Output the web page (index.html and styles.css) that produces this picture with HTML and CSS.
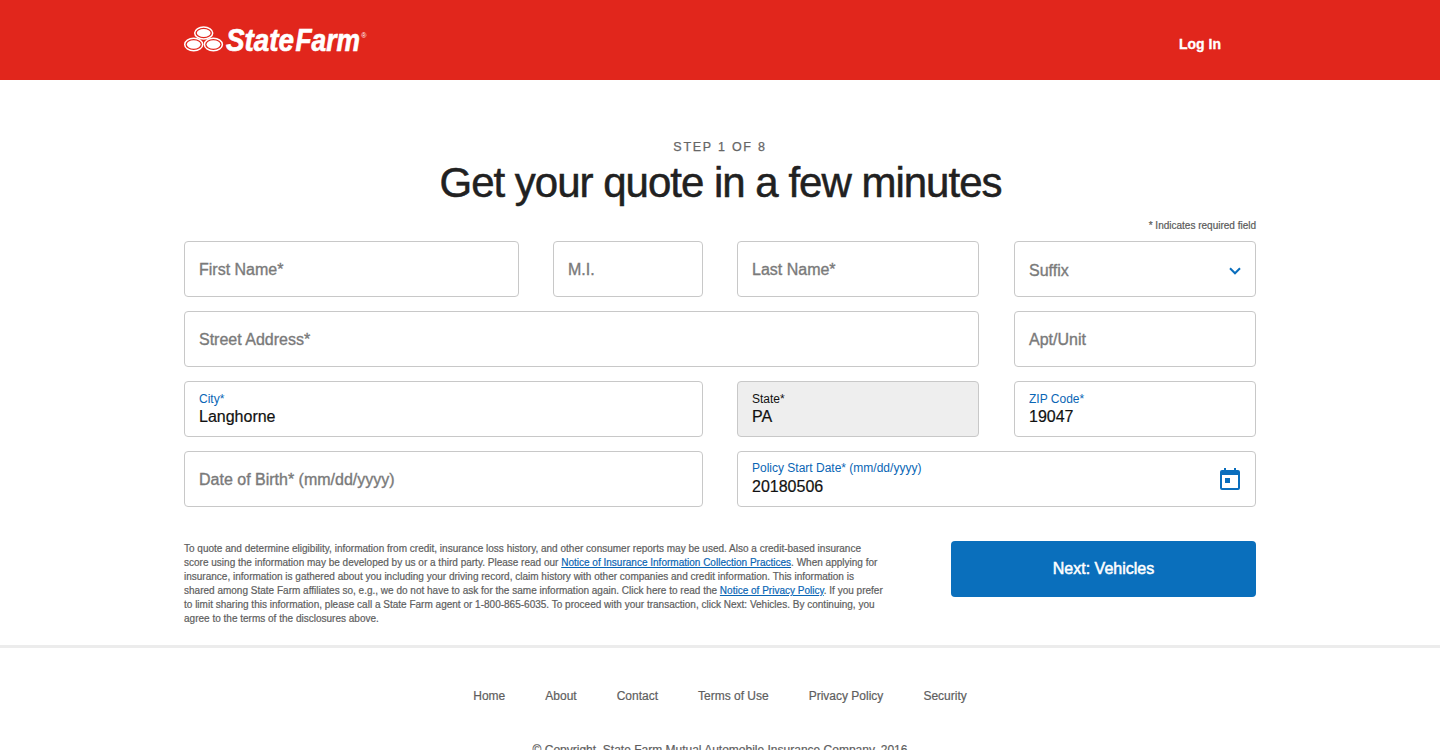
FILE: index.html
```html
<!DOCTYPE html>
<html lang="en">
<head>
<meta charset="utf-8">
<title>State Farm - Get your quote</title>
<link rel="stylesheet" href="styles.css">
</head>
<body>
<header class="site-header">
  <div class="container header-row">
    <svg class="logo" width="186" height="36" viewBox="0 0 186 36" role="img" aria-label="State Farm">
      <g fill="#e1261c" stroke="#fff" stroke-width="1.5">
        <ellipse cx="19.7" cy="9" rx="9" ry="5.9"/>
        <ellipse cx="9.7" cy="20.5" rx="9" ry="6.2"/>
        <ellipse cx="29.4" cy="20.5" rx="9" ry="6.2"/>
      </g>
      <g fill="#fff">
        <ellipse cx="19.7" cy="9" rx="6.9" ry="4"/>
        <ellipse cx="9.7" cy="20.5" rx="6.9" ry="4.2"/>
        <ellipse cx="29.4" cy="20.5" rx="6.9" ry="4.2"/>
      </g>
      <text class="logo-text" x="42" y="26.5" textLength="68" lengthAdjust="spacingAndGlyphs">State</text>
      <text class="logo-text" x="111.5" y="26.5" textLength="64.5" lengthAdjust="spacingAndGlyphs">Farm</text>
      <text class="logo-mark" x="177.3" y="14">®</text>
    </svg>
    <a class="login">Log In</a>
  </div>
</header>
<main class="container">
  <p class="step">STEP 1 OF 8</p>
  <h1 class="title">Get your quote in a few minutes</h1>
  <p class="required-note">* Indicates required field</p>
  <form class="fields">
    <div class="field first"><span class="placeholder">First Name*</span></div>
    <div class="field middle"><span class="placeholder">M.I.</span></div>
    <div class="field last"><span class="placeholder">Last Name*</span></div>
    <div class="field suffix"><span class="placeholder select-text">Suffix</span>
      <svg class="chevron" width="12" height="8" viewBox="0 0 12 8"><path d="M1 1.3 6 6.3 11 1.3" fill="none" stroke="#0a6ebd" stroke-width="2"/></svg>
    </div>
    <div class="field street"><span class="placeholder">Street Address*</span></div>
    <div class="field unit"><span class="placeholder">Apt/Unit</span></div>
    <div class="field city filled"><label>City*</label><span class="value">Langhorne</span></div>
    <div class="field state filled locked"><label>State*</label><span class="value">PA</span></div>
    <div class="field zip filled"><label>ZIP Code*</label><span class="value">19047</span></div>
    <div class="field birth"><span class="placeholder">Date of Birth* (mm/dd/yyyy)</span></div>
    <div class="field start">
      <div class="filled date-text"><label>Policy Start Date* (mm/dd/yyyy)</label><span class="value">20180506</span></div>
      <svg class="calendar" width="20" height="22" viewBox="0 0 20 22"><path fill="#0a6ebd" fill-rule="evenodd" d="M4 0h2v2h8V0h2v2h2a2 2 0 0 1 2 2v16a2 2 0 0 1-2 2H2a2 2 0 0 1-2-2V4a2 2 0 0 1 2-2h2zM2 7v13h16V7zM5 10h5v5H5z"/></svg>
    </div>
  </form>
  <section class="actions">
    <p class="disclosure">To quote and determine eligibility, information from credit, insurance loss history, and other consumer reports may be used. Also a credit-based insurance<br>score using the information may be developed by us or a third party. Please read our <a>Notice of Insurance Information Collection Practices</a>. When applying for<br>insurance, information is gathered about you including your driving record, claim history with other companies and credit information. This information is<br>shared among State Farm affiliates so, e.g., we do not have to ask for the same information again. Click here to read the <a>Notice of Privacy Policy</a>. If you prefer<br>to limit sharing this information, please call a State Farm agent or 1-800-865-6035. To proceed with your transaction, click Next: Vehicles. By continuing, you<br>agree to the terms of the disclosures above.</p>
    <button class="next" type="button">Next: Vehicles</button>
  </section>
</main>
<footer class="site-footer">
  <nav class="footer-nav"><a>Home</a><a>About</a><a>Contact</a><a>Terms of Use</a><a>Privacy Policy</a><a>Security</a></nav>
  <p class="copyright">© Copyright, State Farm Mutual Automobile Insurance Company, 2016</p>
</footer>
</body>
</html>
```
FILE: styles.css
```css
* { box-sizing: border-box; }
body {
  margin: 0;
  height: 100vh;
  overflow: hidden;
  background: #fff;
  color: #212121;
  font-family: "Liberation Sans", Arial, sans-serif;
}
p, h1 { margin: 0; }
.container { width: 1072px; margin: 0 auto; }
.site-header { height: 80px; background: #e1261c; }
.header-row { display: flex; justify-content: space-between; padding: 24px 35px 0 0; }
.logo { display: block; overflow: visible; }
.logo-text {
  fill: #fff;
  stroke: #fff;
  stroke-width: 0.7px;
  font: italic 700 32px "Liberation Sans", Arial, sans-serif;
}
.logo-mark { fill: #fff; font-size: 7px; }
.login {
  margin-top: 12px;
  color: #fff;
  font-size: 14px;
  font-weight: 700;
  line-height: 16px;
  -webkit-text-stroke: 0.3px #fff;
}
.step {
  padding-top: 59px;
  text-align: center;
  font-size: 12.5px;
  line-height: 16px;
  letter-spacing: 1.75px;
  color: #666;
  -webkit-text-stroke: 0.25px #666;
}
.title {
  margin-top: 2px;
  text-align: center;
  font-size: 42px;
  font-weight: 400;
  line-height: 52px;
  letter-spacing: -1px;
  text-indent: 1px;
  -webkit-text-stroke: 0.5px #212121;
}
.required-note {
  margin-top: 10px;
  text-align: right;
  font-size: 10px;
  line-height: 14px;
  color: #5a5a5a;
  -webkit-text-stroke: 0.2px #5a5a5a;
}
.fields {
  display: grid;
  grid-template-columns: 335px 34px 150px 34px 242px 35px 242px;
  grid-auto-rows: 56px;
  row-gap: 14px;
  margin-top: 8px;
}
.field {
  display: flex;
  align-items: center;
  justify-content: space-between;
  padding: 0 14px;
  border: 1px solid #c8c8c8;
  border-radius: 4px;
  font-size: 16px;
  line-height: 18px;
}
.first { grid-column: 1; }
.middle { grid-column: 3; }
.last { grid-column: 5; }
.suffix { grid-column: 7; }
.street { grid-column: 1 / 6; }
.unit, .zip { grid-column: 7; }
.city, .birth { grid-column: 1 / 4; }
.state { grid-column: 5; }
.start { grid-column: 5 / 8; }
.placeholder {
  padding-top: 2px;
  color: #7a7a7a;
  -webkit-text-stroke: 0.35px #7a7a7a;
}
.select-text { padding-top: 4px; }
.chevron { margin-top: 3px; }
.filled {
  flex-direction: column;
  align-items: flex-start;
  justify-content: center;
  padding-bottom: 2px;
}
.date-text { display: flex; }
.filled label {
  font-size: 12px;
  line-height: 17px;
  color: #0a66b5;
}
.date-text label { line-height: 15px; padding-bottom: 2px; }
.value { color: #111; -webkit-text-stroke: 0.2px #111; }
.locked { background: #eee; }
.locked label { color: #111; }
.calendar { margin-right: 1px; }
.actions {
  display: flex;
  justify-content: space-between;
  align-items: flex-start;
  margin-top: 34px;
}
.disclosure {
  padding-top: 1px;
  white-space: nowrap;
  font-size: 10px;
  line-height: 14px;
  letter-spacing: 0.006px;
  color: #5e5e5e;
  -webkit-text-stroke: 0.2px #5e5e5e;
}
.disclosure a {
  color: #0a66b5;
  text-decoration: underline;
  -webkit-text-stroke-color: #0a66b5;
}
.next {
  width: 305px;
  height: 56px;
  border: 0;
  border-radius: 4px;
  background: #0a6fbc;
  color: #fff;
  font: 16px "Liberation Sans", Arial, sans-serif;
  -webkit-text-stroke: 0.5px #fff;
}
.site-footer {
  margin-top: 19px;
  border-top: 3px solid #ececec;
  font-size: 12px;
  line-height: 16px;
  color: #5e5e5e;
  -webkit-text-stroke: 0.2px #5e5e5e;
}
.footer-nav {
  display: flex;
  justify-content: center;
  gap: 40px;
  padding-top: 40px;
}
.copyright { margin-top: 38px; text-align: center; }
```
